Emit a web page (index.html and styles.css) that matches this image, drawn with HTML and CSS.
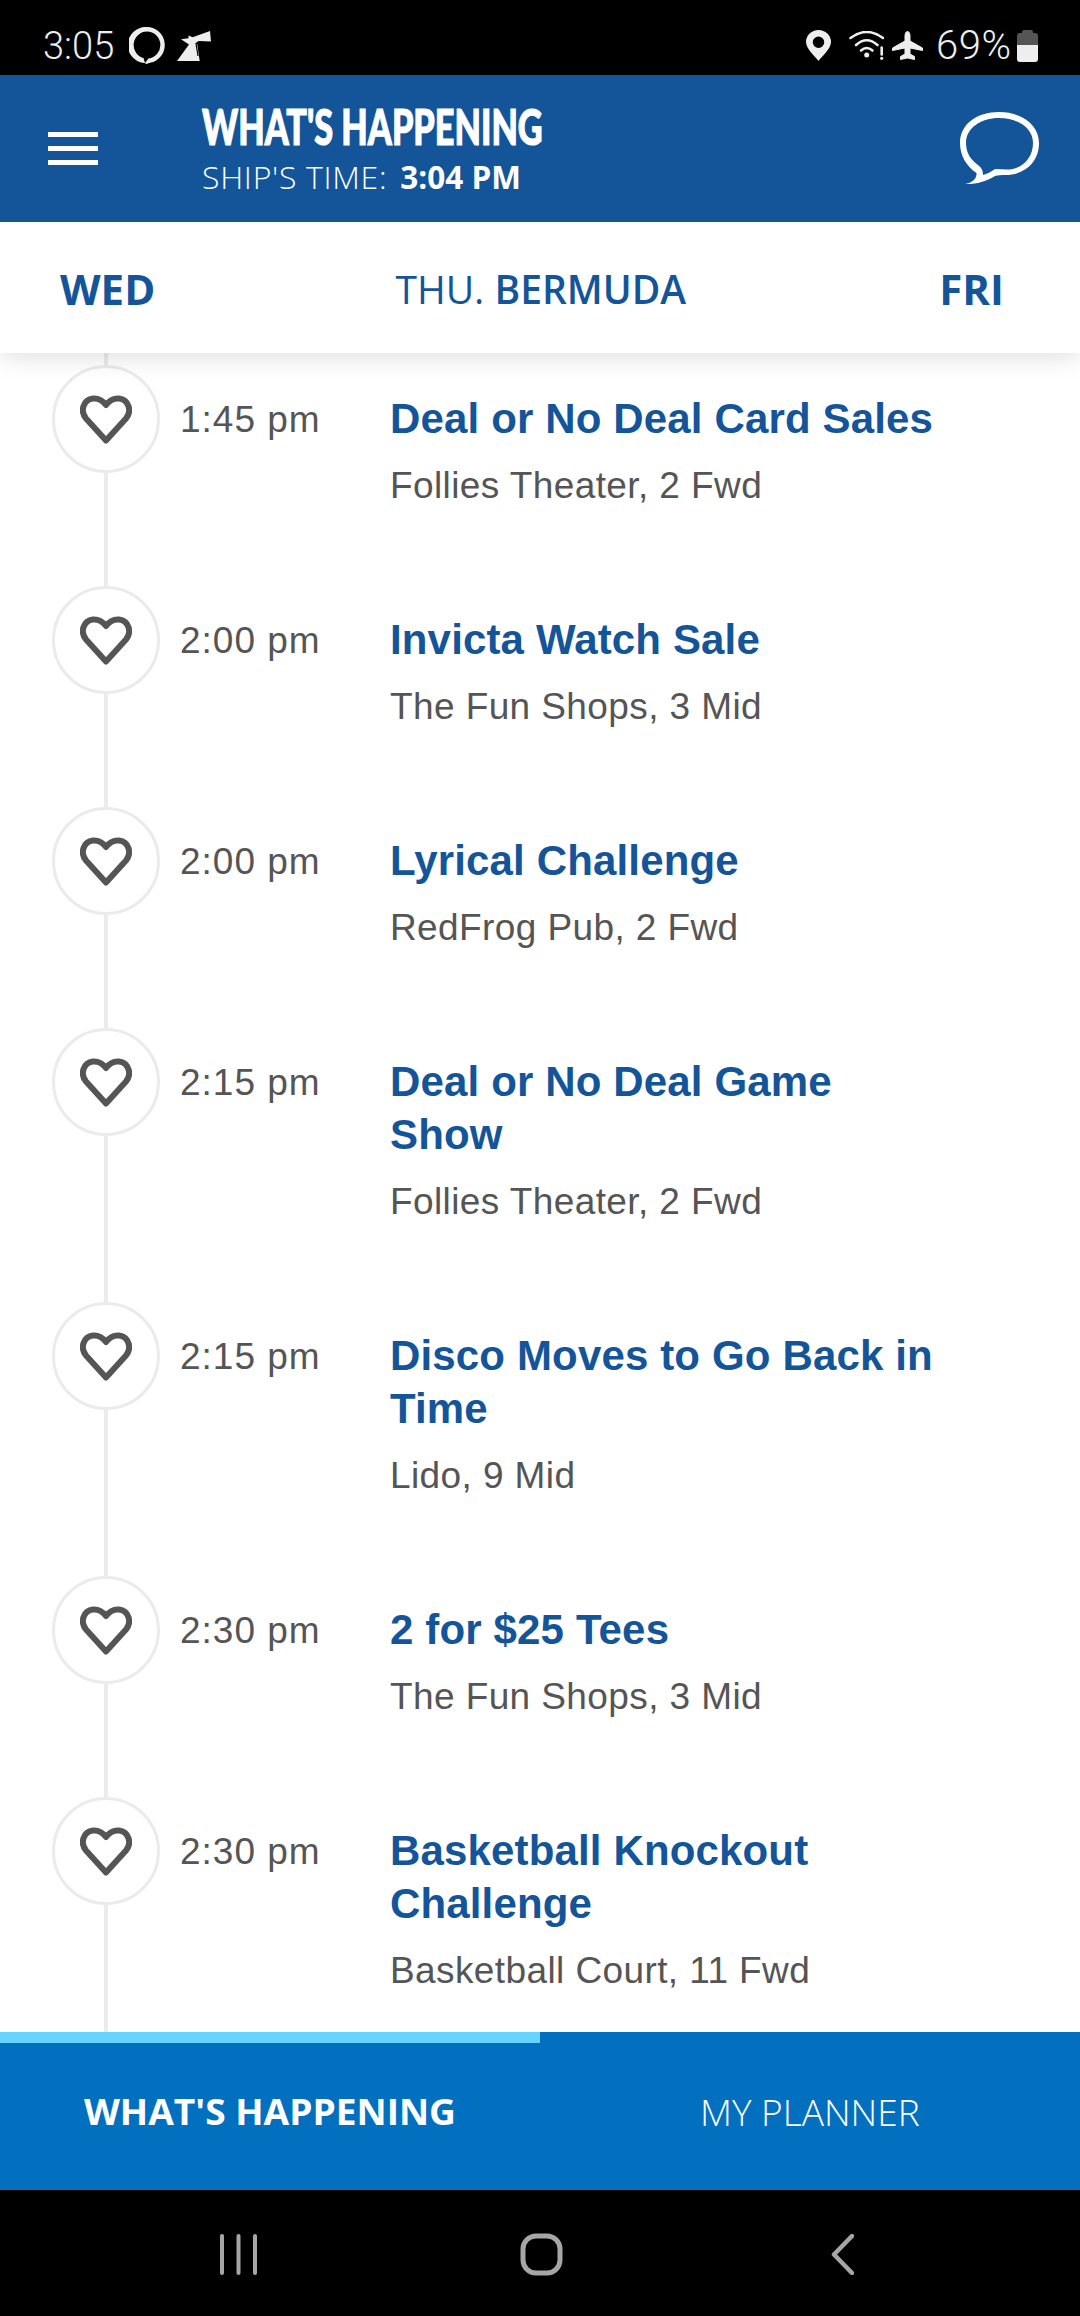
FILE: index.html
```html
<!DOCTYPE html>
<html lang="en">
<head>
<meta charset="utf-8">
<title>What's Happening</title>
<link rel="stylesheet" href="styles.css">
</head>
<body>
<svg class="defs" width="0" height="0" aria-hidden="true">
  <symbol id="heart" viewBox="0 0 52 49">
    <path d="M26 45.500 L6 23.500 C0 16.500 3 4.500 13 3.500 C19 3 23 6 26 10 C29 6 33 3 39 3.500 C49 4.500 52 16.500 46 23.500 Z" fill="none" stroke="#555" stroke-width="6" stroke-linejoin="round"/>
  </symbol>
</svg>
<div class="app">
  <div class="status">
    <div class="status-left">
      <span class="clock">3:05</span>
      <svg class="i-alexa" viewBox="0 0 36 37"><path fill-rule="evenodd" fill="#eee" d="M18 0 A18 18 0 0 1 21 35.700 L17.500 37 L15.500 36 A18 18 0 0 1 18 0 Z M18 4.500 A13.500 13.500 0 0 0 14.500 31 L16 36 L19.500 31.400 A13.500 13.500 0 0 0 18 4.500 Z"/></svg>
      <svg class="i-funnel" viewBox="0 0 34 30"><path d="M0 30 L12 13.500 L4 8.300 L11.500 7.300 L11.500 4.500 L15.700 6.300 L33 0 L34 10.500 L22 10 L20 11.500 L22.700 30 Z" fill="#eee"/><path d="M21.500 10.800 L19 12.500 L21 25" stroke="#000" stroke-width="1.200" fill="none"/></svg>
    </div>
    <div class="status-right">
      <svg class="i-pin" viewBox="0 0 25 31"><path fill-rule="evenodd" d="M12.500 31 C9 26 0 19 0 12 A12.500 12 0 0 1 25 12 C25 19 16 26 12.500 31 Z M12.500 6.500 A5.700 5.700 0 1 0 12.500 18 A5.700 5.700 0 1 0 12.500 6.500 Z" fill="#eee"/></svg>
      <svg class="i-wifi" viewBox="0 0 35 29"><g fill="none" stroke="#eee" stroke-width="2.600" stroke-linecap="round"><path d="M1.500 7 Q17.700 -5 34 7"/><path d="M7 14 Q17.700 4.500 28.500 14"/><path d="M12 19.500 Q17.700 14.500 23.500 19.500"/><path d="M32.700 16.500 V23.500"/></g><circle cx="17.700" cy="24" r="2.500" fill="#eee"/><circle cx="32.700" cy="27.300" r="1.600" fill="#eee"/></svg>
      <svg class="i-plane" viewBox="0 0 31 29"><path d="M15.500 0.500 C17 0.500 18 2.500 18 5 V10 L30.500 17 V19.500 L18 17 V23 L22.500 25.500 V28.500 L15.500 27 L8.500 28.500 V25.500 L13 23 V17 L0.500 19.500 V17 L13 10 V5 C13 2.500 14 0.500 15.500 0.500 Z" fill="#eee" stroke="#eee" stroke-linejoin="round"/></svg>
      <span class="pct">69%</span>
      <div class="battery"><div class="battery-cap"></div><div class="battery-empty"></div><div class="battery-fill"></div></div>
    </div>
  </div>

  <header class="header">
    <div class="burger"><span></span><span></span><span></span></div>
    <div class="titles">
      <div class="h-title"><span class="squeeze">WHAT'S HAPPENING</span></div>
      <div class="h-sub"><span class="h-label">SHIP'S TIME:</span> <b>3:04 PM</b></div>
    </div>
    <svg class="i-chat" viewBox="0 0 80 72"><path fill-rule="evenodd" fill="#fff" d="M5 72 C12 71 17 67 16.500 61 C6 54 0 43 0 31 C0 12 17 0 39 0 C62 0 79 13 79 31 C79 50 65 63 45 63 C41 63 38 63 35 64 C29 68 16 73 5 72 Z M39 6 C21 6 6 16 6 31 C6 41 11 48 18 53 C22 56 23 59 23 63 C27 62 31 60 35 57 C39 57 43 57.500 47 57.500 C62 57.500 73 46 73 31 C73 16 58 6 39 6 Z"/></svg>
  </header>

  <nav class="days">
    <span class="day day-side">WED</span>
    <span class="day day-now">THU. <b>BERMUDA</b></span>
    <span class="day day-side">FRI</span>
  </nav>

  <main class="list">
    <div class="stub"></div>
    <article class="row">
      <div class="track"><div class="circle"><svg class="heart"><use href="#heart"/></svg></div><div class="line"></div></div>
      <div class="time">1:45 pm</div>
      <div class="info"><h2>Deal or No Deal Card Sales</h2><p>Follies Theater, 2 Fwd</p></div>
    </article>
    <article class="row">
      <div class="track"><div class="circle"><svg class="heart"><use href="#heart"/></svg></div><div class="line"></div></div>
      <div class="time">2:00 pm</div>
      <div class="info"><h2>Invicta Watch Sale</h2><p>The Fun Shops, 3 Mid</p></div>
    </article>
    <article class="row">
      <div class="track"><div class="circle"><svg class="heart"><use href="#heart"/></svg></div><div class="line"></div></div>
      <div class="time">2:00 pm</div>
      <div class="info"><h2>Lyrical Challenge</h2><p>RedFrog Pub, 2 Fwd</p></div>
    </article>
    <article class="row">
      <div class="track"><div class="circle"><svg class="heart"><use href="#heart"/></svg></div><div class="line"></div></div>
      <div class="time">2:15 pm</div>
      <div class="info"><h2>Deal or No Deal Game Show</h2><p>Follies Theater, 2 Fwd</p></div>
    </article>
    <article class="row">
      <div class="track"><div class="circle"><svg class="heart"><use href="#heart"/></svg></div><div class="line"></div></div>
      <div class="time">2:15 pm</div>
      <div class="info"><h2>Disco Moves to Go Back in Time</h2><p>Lido, 9 Mid</p></div>
    </article>
    <article class="row">
      <div class="track"><div class="circle"><svg class="heart"><use href="#heart"/></svg></div><div class="line"></div></div>
      <div class="time">2:30 pm</div>
      <div class="info"><h2>2 for $25 Tees</h2><p>The Fun Shops, 3 Mid</p></div>
    </article>
    <article class="row">
      <div class="track"><div class="circle"><svg class="heart"><use href="#heart"/></svg></div><div class="line"></div></div>
      <div class="time">2:30 pm</div>
      <div class="info"><h2>Basketball Knockout Challenge</h2><p>Basketball Court, 11 Fwd</p></div>
    </article>
  </main>

  <div class="tabs">
    <div class="tab tab-on"><span class="squeeze2">WHAT'S HAPPENING</span></div>
    <div class="tab"><span class="squeeze3">MY PLANNER</span></div>
  </div>

  <div class="sysnav">
    <svg class="i-recents" viewBox="0 0 37 41"><g stroke="#a6a6a6" stroke-width="4" stroke-linecap="round"><path d="M2 2 V39"/><path d="M18.500 2 V39"/><path d="M35 2 V39"/></g></svg>
    <svg class="i-home" viewBox="0 0 43 43"><rect x="3" y="3" width="37" height="37" rx="13" fill="none" stroke="#a6a6a6" stroke-width="5"/></svg>
    <svg class="i-back" viewBox="0 0 23 41"><path d="M21 2 L3 20.500 L21 39" fill="none" stroke="#a6a6a6" stroke-width="4.500" stroke-linecap="round" stroke-linejoin="round"/></svg>
  </div>
</div>
</body>
</html>
```

FILE: styles.css
```css
* { box-sizing: border-box; }
html, body { margin: 0; padding: 0; }
body { width: 1080px; height: 2316px; overflow: hidden; background: #fff; font-family: "Liberation Sans", Arial, sans-serif; }
.defs { position: absolute; }
.app { width: 1080px; height: 2316px; display: flex; flex-direction: column; }

.status { height: 75px; flex: none; background: #000; color: #eee; display: flex; justify-content: space-between; align-items: center; padding: 16px 42px 0 43px; font-family: Roboto, sans-serif; font-weight: 300; font-size: 38px; line-height: 44px; }
.status-left, .status-right { display: flex; align-items: center; }
.clock { width: 86px; }
.i-alexa { width: 36px; height: 37px; margin-right: 12px; }
.i-funnel { width: 34px; height: 30px; }
.i-pin { width: 25px; height: 31px; margin-right: 18px; }
.i-wifi { width: 35px; height: 29px; margin-right: 8px; }
.i-plane { width: 31px; height: 29px; margin-right: 13px; }
.pct { width: 81px; font-size: 40px; letter-spacing: 0.5px; }
.battery { width: 21px; height: 32px; display: flex; flex-direction: column; align-items: center; }
.battery-cap { width: 11px; height: 3px; background: #555; border-radius: 2px 2px 0 0; }
.battery-empty { width: 21px; height: 12px; background: #555; border-radius: 3px 3px 0 0; }
.battery-fill { width: 21px; height: 17px; background: #eee; border-radius: 0 0 3px 3px; }

.header { height: 147px; flex: none; background: #14559a; color: #fff; display: flex; align-items: center; padding: 0 40px 0 48px; position: relative; z-index: 3; }
.burger { width: 50px; display: flex; flex-direction: column; gap: 9px; margin-right: 104px; }
.burger span { display: block; height: 5px; background: #fff; }
.titles { flex: 1; font-family: "Open Sans", sans-serif; }
.h-title { font-family: Lato, sans-serif; font-size: 50px; font-weight: 900; line-height: 58px; white-space: nowrap; margin-top: -2px; }
.squeeze { display: inline-block; transform: scaleX(0.685); transform-origin: left center; -webkit-text-stroke: 1.2px #fff; }
.h-sub { font-size: 32px; line-height: 42px; font-weight: 400; white-space: nowrap; display: flex; gap: 13px; padding-top: 1px; }
.h-label { letter-spacing: 0.7px; font-weight: 300; }
.h-sub b { font-weight: 700; font-size: 31.500px; }
.i-chat { width: 80px; height: 72px; margin-bottom: 1px; }

.days { height: 131px; flex: none; background: #fff; display: flex; justify-content: space-between; align-items: center; padding: 2px 76px 0 60px; font-family: "Open Sans", sans-serif; color: #14559a; font-size: 42px; box-shadow: 0 4px 24px rgba(0,0,0,.13); position: relative; z-index: 2; }
.day-side { font-weight: 700; }
.day-now { font-size: 39px; font-weight: 400; margin-right: 13px; }
.day-now b { font-weight: 600; }

.list { flex: 1; min-height: 0; overflow: hidden; padding-left: 52px; }
.stub { width: 108px; height: 12px; display: flex; justify-content: center; }
.stub::before { content: ""; width: 4px; background: #ebebeb; }
.row { display: flex; }
.track { width: 108px; flex: none; display: flex; flex-direction: column; align-items: center; }
.circle { width: 108px; height: 108px; flex: none; border: 3px solid #ebebeb; border-radius: 50%; display: flex; align-items: center; justify-content: center; }
.heart { width: 52px; height: 49px; margin-top: 1px; }
.line { flex: 1; width: 4px; background: #ebebeb; }
.time { width: 210px; margin-left: 20px; flex: none; padding-top: 28px; font-size: 37px; line-height: 53px; color: #555; letter-spacing: 1px; }
.info { width: 555px; padding-top: 27px; padding-bottom: 74px; }
.info h2 { margin: 0; font-size: 42px; line-height: 53px; font-weight: 700; color: #14559a; letter-spacing: 0.15px; }
.info p { margin: 14px 0 0; font-size: 37px; line-height: 53px; color: #555; letter-spacing: 0.4px; }

.tabs { height: 158px; flex: none; background: #0270bf; display: flex; color: #fff; font-family: "Open Sans", sans-serif; font-size: 36px; }
.tab { width: 540px; display: flex; align-items: center; padding-left: 84px; padding-bottom: 11px; border-top: 11px solid transparent; font-weight: 300; }
.tab + .tab { padding-left: 160px; }
.tab-on { border-top-color: #66d4ff; font-weight: 700; }
.squeeze2 { display: inline-block; white-space: nowrap; transform: scaleX(1.03); transform-origin: left center; }
.squeeze3 { display: inline-block; white-space: nowrap; font-size: 37px; }

.sysnav { height: 126px; flex: none; background: #000; display: flex; align-items: center; padding-left: 220px; }
.i-recents { width: 37px; height: 41px; margin-right: 263px; margin-top: 3px; }
.i-home { width: 43px; height: 43px; margin-right: 268px; margin-top: 3px; }
.i-back { width: 23px; height: 41px; margin-top: 3px; }
```
